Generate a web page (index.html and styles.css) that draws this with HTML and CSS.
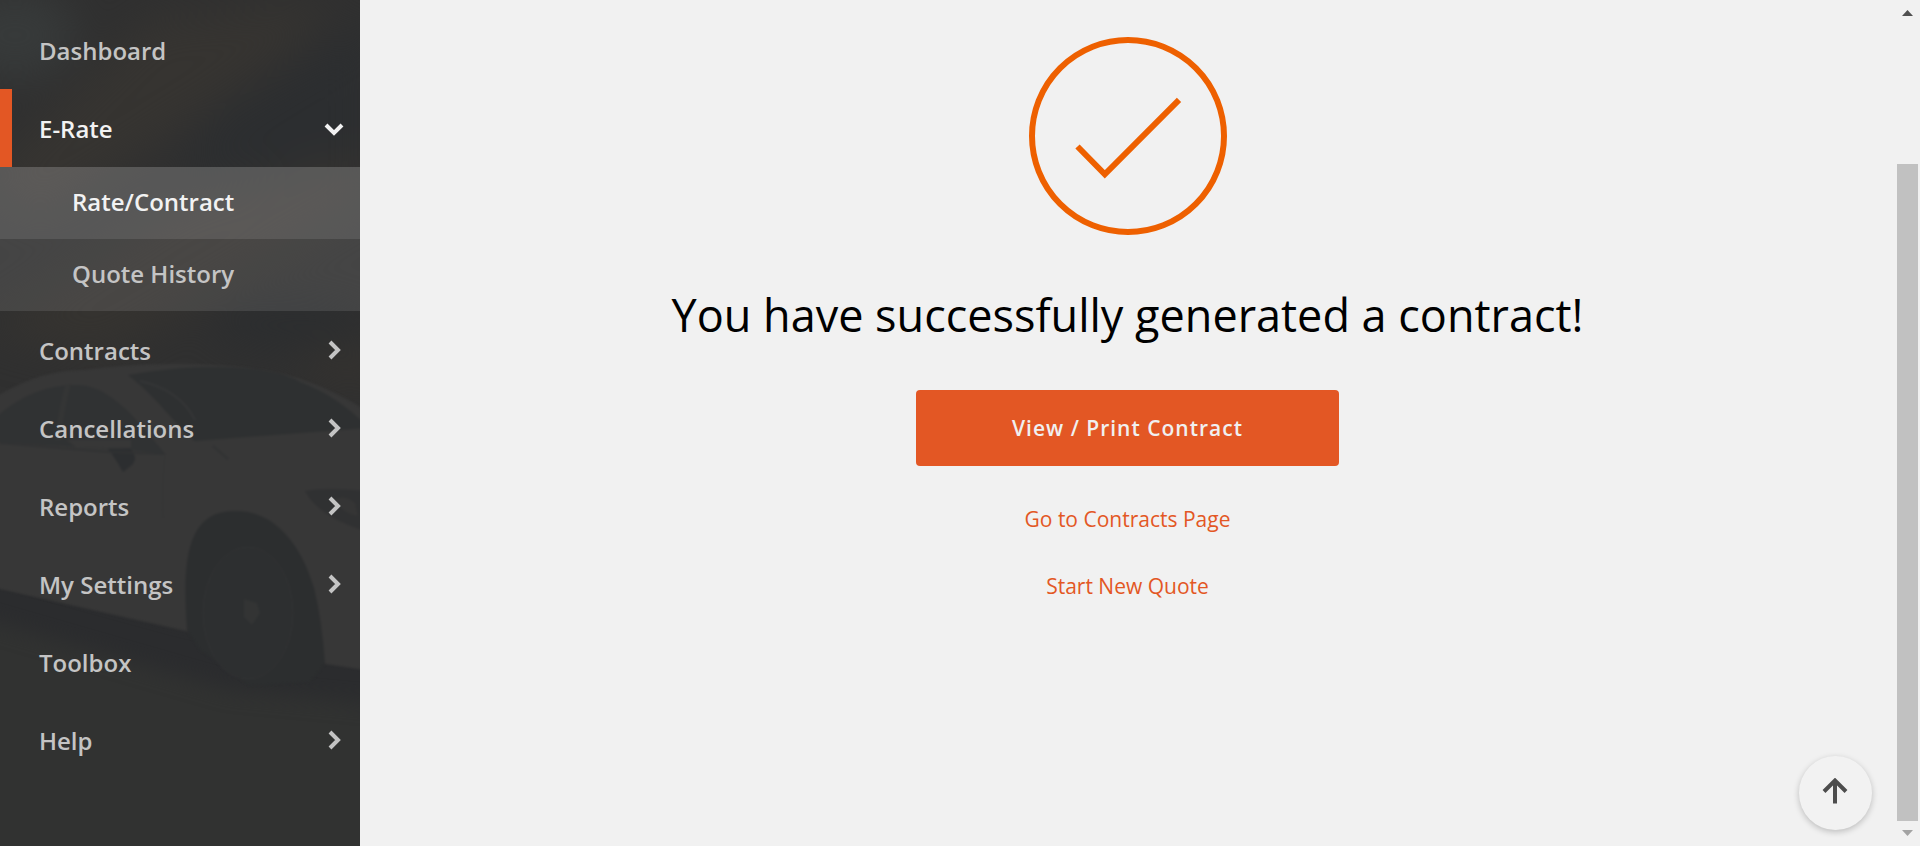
FILE: index.html
```html
<!DOCTYPE html>
<html lang="en">
<head>
<meta charset="utf-8">
<title>Contract generated</title>
<link rel="stylesheet" href="styles.css">
</head>
<body>
<div class="app">
  <aside class="sidebar">
    <svg class="sidebar-art" viewBox="0 0 360 846" preserveAspectRatio="xMidYMid slice" aria-hidden="true">
      <defs>
        <filter id="soft" x="-50%" y="-50%" width="200%" height="200%" color-interpolation-filters="sRGB"><feGaussianBlur stdDeviation="20"/></filter>
        <filter id="edge" color-interpolation-filters="sRGB"><feGaussianBlur stdDeviation="1"/></filter>
        <filter id="shade" x="-20%" y="-50%" width="140%" height="200%" color-interpolation-filters="sRGB"><feGaussianBlur stdDeviation="10"/></filter>
      </defs>
      <rect width="360" height="846" fill="#303030"/>
      <g filter="url(#soft)">
        <ellipse cx="15" cy="35" rx="60" ry="45" fill="#373a3a"/>
        <path d="M-20 180 150 20 340 0 280 60 40 220Z" fill="#363431"/>
        <path d="M210 120 370 20V170L170 180Z" fill="#2c2e30"/>
        <path d="M-20 330 180 200 370 150V200L100 360Z" fill="#353330"/>
        <ellipse cx="290" cy="325" rx="80" ry="20" fill="#2b2d2f"/>
        <ellipse cx="350" cy="365" rx="50" ry="15" fill="#36332f"/>
      </g>
      <path d="M0 560H360V846H0Z" fill="#313231"/>
      <path d="M-30 560 190 620 390 650V705L230 690-30 615Z" fill="#2b2c2e" filter="url(#shade)"/>
      <g filter="url(#edge)">
        <path d="M-5 397C35 374 60 370 85 370C140 362 220 362 270 371C310 379 342 395 365 410V670L325 664 190 632 -5 588Z" fill="#373737"/>
        <path d="M128 375C200 362 270 365 300 382C330 393 350 410 365 424V428L195 441C180 430 155 395 128 375Z" fill="#2e3031"/>
        <path d="M140 381Q180 390 195 420" fill="none" stroke="#353637" stroke-width="2"/>
        <path d="M-5 418C25 392 50 386 73 385C105 383 130 410 165 454L130 450 -5 442Z" fill="#303233"/>
        <path d="M71 384C66 404 63 420 61 440L55 440C57 420 60 404 65 385Z" fill="#343535"/>
        <path d="M66 440H131V449L76 447Z" fill="#373737"/>
        <path d="M108 449 130 448Q138 457 133 464L123 472Q118 463 112 454Z" fill="#2c2e30"/>
        <path d="M0 443 110 452 165 454M213 446 228 459" fill="none" stroke="#313233" stroke-width="2"/>
        <path d="M165 454Q162 480 163 518" fill="none" stroke="#353636" stroke-width="1"/>
        <path d="M305 491Q325 487 365 491V531Q318 516 305 491Z" fill="#303132"/>
        <path d="M333 500Q345 494 355 503L358 516Q345 515 333 500Z" fill="#353535"/>
        <path d="M187 630C183 570 183 511 234 511C275 510 301 545 314 588Q322 620 325 664L310 682 250 686 200 650Z" fill="#2c2e2f"/>
        <ellipse cx="248" cy="613" rx="45" ry="66" fill="#2d2f30" stroke="#323334" stroke-width="1"/>
        <path d="M244 599 257 603 260 613 252 625 244 617Z" fill="#333434"/>
      </g>
    </svg>
    <nav class="nav" aria-label="Main">
      <a class="nav-item" href="#">Dashboard</a>
      <a class="nav-item active" href="#">E-Rate
        <svg class="chevron" viewBox="0 0 20 20" aria-hidden="true"><path d="m2 7 8 8 8-8"/></svg></a>
      <div class="subnav">
        <a class="sub-item current" href="#">Rate/Contract</a>
        <a class="sub-item" href="#">Quote History</a>
      </div>
      <a class="nav-item" href="#">Contracts
        <svg class="chevron" viewBox="0 0 20 20" aria-hidden="true"><path d="m6 2 8 8-8 8"/></svg></a>
      <a class="nav-item" href="#">Cancellations
        <svg class="chevron" viewBox="0 0 20 20" aria-hidden="true"><path d="m6 2 8 8-8 8"/></svg></a>
      <a class="nav-item" href="#">Reports
        <svg class="chevron" viewBox="0 0 20 20" aria-hidden="true"><path d="m6 2 8 8-8 8"/></svg></a>
      <a class="nav-item" href="#">My Settings
        <svg class="chevron" viewBox="0 0 20 20" aria-hidden="true"><path d="m6 2 8 8-8 8"/></svg></a>
      <a class="nav-item" href="#">Toolbox</a>
      <a class="nav-item" href="#">Help
        <svg class="chevron" viewBox="0 0 20 20" aria-hidden="true"><path d="m6 2 8 8-8 8"/></svg></a>
    </nav>
  </aside>
  <main class="content">
    <svg class="success" viewBox="0 0 198 198" aria-hidden="true">
      <circle cx="99" cy="99" r="96"/>
      <path d="m48.500 109.500 27.300 27.800 74.200-74.500"/>
    </svg>
    <h1 class="title">You have successfully generated a contract!</h1>
    <button class="primary" type="button">View / Print Contract</button>
    <a class="link" href="#">Go to Contracts Page</a>
    <a class="link" href="#">Start New Quote</a>
  </main>
  <div class="scrollbar" aria-hidden="true">
    <svg class="arrow up" viewBox="0 0 11 6"><path d="M0 6 5.500 0 11 6Z"/></svg>
    <div class="thumb"></div>
    <svg class="arrow" viewBox="0 0 11 6"><path d="M0 0h11L5.500 6Z"/></svg>
  </div>
</div>
<button class="to-top" type="button" aria-label="Back to top">
  <svg viewBox="0 0 26 26" aria-hidden="true"><path d="M13 25.500V3M2 13.500 13 2.500l11 11"/></svg>
</button>
</body>
</html>
```
FILE: styles.css
```css
* { box-sizing: border-box; }

body {
  margin: 0;
  background: #f1f1f1;
  font-family: "Open Sans", "Noto Sans", sans-serif;
}

.app {
  display: flex;
  min-height: 100vh;
}

.sidebar {
  position: relative;
  flex: 0 0 360px;
  background: #303030;
}

.sidebar-art {
  position: absolute;
  inset: 0;
  width: 100%;
  height: 100%;
}

.nav {
  position: relative;
  padding-top: 11px;
}

.nav-item,
.sub-item {
  display: flex;
  align-items: center;
  color: #c4c4c4;
  font-size: 24px;
  font-weight: 600;
  line-height: 32px;
  text-decoration: none;
}

.nav-item {
  justify-content: space-between;
  height: 78px;
  padding: 2px 16px 0 39px;
}

.nav-item.active {
  padding-left: 27px;
  border-left: 12px solid #e35724;
  color: #f2f2f2;
}

.subnav { background: rgba(255, 255, 255, .1); }

.sub-item {
  height: 72px;
  padding: 0 0 2px 72px;
}

.sub-item.current {
  background: rgba(255, 255, 255, .1);
  color: #f2f2f2;
}

.chevron {
  width: 20px;
  height: 20px;
  margin-bottom: 2px;
  fill: none;
  stroke: currentColor;
  stroke-width: 4;
}

.content {
  display: flex;
  flex: 1;
  flex-direction: column;
  align-items: center;
  padding-top: 37px;
}

.success {
  width: 198px;
  height: 198px;
  fill: none;
  stroke: #ee6000;
  stroke-width: 6;
}

.title {
  margin: 47px 0 42px;
  color: #000;
  font-size: 45px;
  font-weight: 400;
  line-height: 66px;
}

.primary {
  width: 423px;
  height: 76px;
  margin-bottom: 38px;
  border: 0;
  border-radius: 4px;
  background: #e35724;
  color: #f0f0f0;
  font-family: inherit;
  font-size: 21px;
  font-weight: 600;
  letter-spacing: 1px;
}

.link {
  margin-bottom: 37px;
  color: #e35724;
  font-size: 21px;
  font-weight: 400;
  line-height: 30px;
  text-decoration: none;
}

.scrollbar {
  display: flex;
  flex: 0 0 25px;
  flex-direction: column;
  align-items: center;
  padding: 10px 0;
}

.arrow {
  width: 11px;
  height: 6px;
  fill: #a3a3a3;
}

.arrow.up { fill: #505050; }

.thumb {
  flex: 1;
  width: 21px;
  margin: 148px 0 9px;
  background: #c1c1c1;
}

.to-top {
  position: fixed;
  right: 48px;
  bottom: 16px;
  display: grid;
  place-items: center;
  width: 73px;
  height: 74px;
  padding: 0 2px 4px 0;
  border: 0;
  border-radius: 50%;
  background: #f2f2f2;
  box-shadow: 0 2px 6px rgba(0, 0, 0, .22);
}

.to-top svg {
  width: 26px;
  height: 26px;
  fill: none;
  stroke: #4d4d4d;
  stroke-width: 4;
}
```
